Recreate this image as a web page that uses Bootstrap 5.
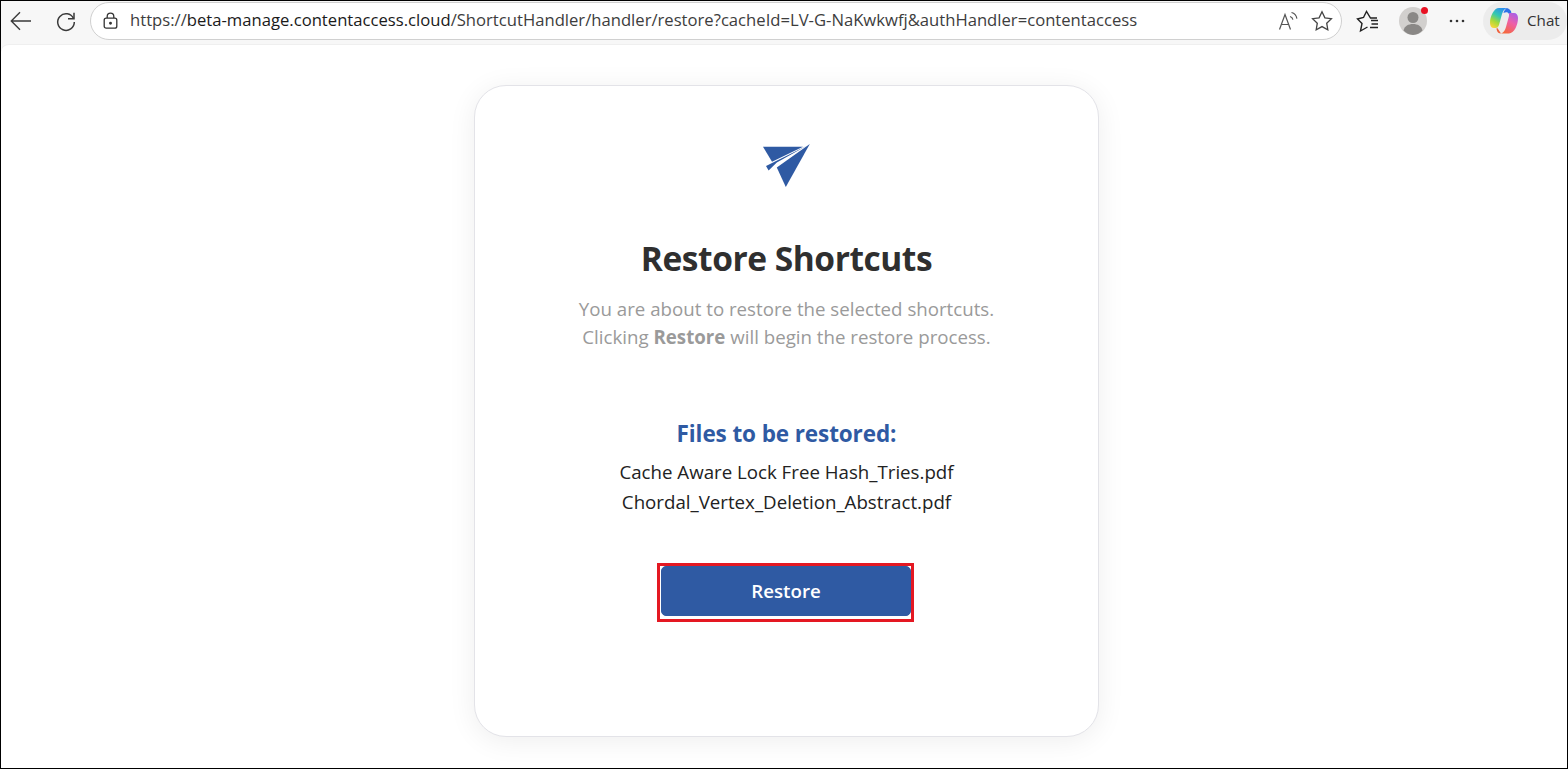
<!DOCTYPE html>
<html lang="en">

<head>
    <meta charset="UTF-8">
    <meta name="viewport" content="width=device-width, initial-scale=1.0">
    <title>Restore Shortcuts</title>
    <link href="https://cdn.jsdelivr.net/npm/bootstrap@5.3.3/dist/css/bootstrap.min.css" rel="stylesheet">
    <style>
        html, body {
            height: 100%;
            overflow: hidden;
        }

        body {
            font-family: "Open Sans", "Noto Sans", sans-serif;
            background: #fff;
        }

        .browser-frame {
            height: 769px;
            border: 1px solid #000;
            background: #f7f7f7;
        }

        .browser-bar {
            height: 43px;
            padding: 0 0 4px 7px;
        }

        .bar-icon {
            width: 26px;
            height: 26px;
            flex: none;
        }

        .reload-icon {
            margin-left: 19px;
        }

        .url-box {
            width: 1252px;
            height: 38px;
            margin-left: 11px;
            padding: 0 7px 0 11px;
            background: #fff;
            border: 1px solid #d0d0d0;
            border-radius: 19px;
        }

        .url-text {
            margin-left: 11px;
            font-size: 16.65px;
            color: #3d3d3d;
            white-space: nowrap;
        }

        .url-text b {
            font-weight: 400;
            color: #1a1a1a;
        }

        .favs-icon {
            margin-left: 13px;
        }

        .avatar-wrap {
            position: relative;
            width: 28px;
            height: 28px;
            margin-left: 18px;
        }

        .avatar-dot {
            position: absolute;
            top: 0;
            right: -1px;
            width: 7px;
            height: 7px;
            border-radius: 50%;
            background: #e81123;
        }

        .more-icon {
            margin-left: 21px;
        }

        .chat-pill {
            width: 84px;
            height: 38px;
            margin-left: auto;
            padding-left: 7px;
            gap: 9px;
            background: #ececec;
            border-radius: 19px;
            font-size: 15.2px;
            color: #333;
        }

        .page-area {
            height: 724px;
            background: #fff;
            border-radius: 8px 0 0 0;
            padding-top: 40px;
            border-top: 1px solid #efefef;
        }

        .restore-card {
            width: 625px;
            height: 652px;
            margin-left: 473px;
            padding-top: 58px;
            text-align: center;
            background: #fff;
            border: 1px solid #e3e3e8;
            border-radius: 32px;
            box-shadow: 0 4px 28px rgba(0, 0, 0, 0.07);
        }

        .restore-title {
            margin: 43px 0 0;
            font-size: 33.5px;
            line-height: 54px;
            font-weight: 700;
            letter-spacing: -0.45px;
            color: #2f2f2f;
        }

        .restore-text {
            margin: 10px 0 0;
            font-size: 18.7px;
            line-height: 28px;
            color: #9a9a9a;
        }

        .files-title {
            margin: 66px 0 0;
            font-size: 22.5px;
            line-height: 34px;
            font-weight: 700;
            letter-spacing: -0.1px;
            color: #2f5aa3;
        }

        .file-names {
            margin: 6px 0 0;
            padding: 0;
            list-style: none;
            font-size: 18.7px;
            line-height: 30px;
            color: #222;
        }

        .highlight-box {
            width: 257px;
            height: 59px;
            margin: 46px 0 0 182px;
            border: 3px solid #e41822;
        }

        .restore-btn {
            width: 250px;
            height: 50px;
            padding: 0;
            font-size: 18.7px;
            font-weight: 600;
            background: #2f5aa3;
            border-color: #2f5aa3;
            border-radius: 5px;
        }
    </style>
</head>

<body>
    <div class="browser-frame d-flex flex-column">
        <div class="browser-bar d-flex align-items-center">
            <svg class="bar-icon" viewBox="0 0 26 26" fill="none" stroke="#3a3a3a" stroke-width="1.4">
                <path d="M3.5 13H23M12 4.2 3.3 13l8.7 8.8" />
            </svg>
            <svg class="bar-icon reload-icon" viewBox="0 0 26 26" fill="none" stroke="#3a3a3a" stroke-width="1.5">
                <path d="M20.5 10.5A8.3 8.3 0 1 0 21.3 14" />
                <path d="M21 4.8v6h-6" />
            </svg>
            <div class="url-box d-flex align-items-center">
                <svg width="17" height="18" viewBox="0 0 17 18" fill="none" stroke="#333" stroke-width="1.3">
                    <rect x="2.2" y="6.2" width="12.6" height="10" rx="2" />
                    <path d="M5.2 6V4.4a3.3 3.3 0 0 1 6.6 0V6" />
                    <circle cx="8.5" cy="11.2" r=".8" fill="#333" />
                </svg>
                <span class="url-text">https://<b>beta-manage.contentaccess.cloud</b>/ShortcutHandler/handler/restore?cacheId=LV-G-NaKwkwfj&amp;authHandler=contentaccess</span>
                <svg class="ms-auto" width="24" height="22" viewBox="0 0 24 22" fill="none" stroke="#555" stroke-width="1.2">
                    <path d="M1.5 19.5 7 4.500l5.500 15M3.300 14.500h7.400" />
                    <path d="M12 6.500c1.600.4 2.600 1.500 2.900 3.200M13.500 2.500c3 .7 4.900 3 5.400 6.200" />
                </svg>
                <svg class="ms-2" width="24" height="24" viewBox="0 0 24 24" fill="none" stroke="#444" stroke-width="1.3">
                    <path d="m12 2.800 2.900 6 6.500.9-4.700 4.500 1.100 6.500-5.800-3.100-5.800 3.100 1.100-6.500-4.700-4.500 6.500-.9z" />
                </svg>
            </div>
            <svg class="bar-icon favs-icon" viewBox="0 0 26 26" fill="none" stroke="#222" stroke-width="1.4">
                <path d="M22 10h-6.500l-4-6.500-3 6-6 1.500 4.500 4.500-1.500 7.500 7-4" />
                <path d="M16 12.500h7M16.500 16h6.500M15 19.500h8" />
            </svg>
            <div class="avatar-wrap">
                <svg width="28" height="28" viewBox="0 0 28 28">
                    <circle cx="14" cy="14" r="14" fill="#d2d0ce" />
                    <circle cx="14" cy="10.500" r="5.500" fill="#8a8886" />
                    <path d="M4.500 23.500c1-4.500 5-6.500 9.500-6.500s8.500 2 9.500 6.500A14 14 0 0 1 14 28a14 14 0 0 1-9.500-4.500z" fill="#8a8886" />
                </svg>
                <span class="avatar-dot"></span>
            </div>
            <svg class="more-icon" width="18" height="6" viewBox="0 0 18 6" fill="#333">
                <circle cx="3" cy="3" r="1.300" />
                <circle cx="9" cy="3" r="1.300" />
                <circle cx="15" cy="3" r="1.300" />
            </svg>
            <div class="chat-pill d-flex align-items-center">
                <svg width="28" height="26" viewBox="0 0 28 26">
                    <defs>
                        <linearGradient id="copilotLeft" x1=".7" y1="0" x2=".2" y2="1">
                            <stop offset="0" stop-color="#2a8ff0" />
                            <stop offset=".4" stop-color="#35c9b0" />
                            <stop offset=".7" stop-color="#a6d93a" />
                            <stop offset="1" stop-color="#f9d63b" />
                        </linearGradient>
                        <linearGradient id="copilotRight" x1=".8" y1="0" x2=".3" y2="1">
                            <stop offset="0" stop-color="#a85fe8" />
                            <stop offset=".45" stop-color="#ee5fa8" />
                            <stop offset="1" stop-color="#f5683c" />
                        </linearGradient>
                    </defs>
                    <path d="M9 0h8c-3 1-4 3-5 6L9 17c-.7 2.500-2.500 3-5 3-2.500 0-4-2-4-5C0 8 4 0 9 0z" fill="url(#copilotLeft)" />
                    <path d="M16 0c2.500 0 4.500 1.500 5.500 4.500L19 6c-1-2-3-2-5.500-1C14 3 15 1 17 0z" fill="#2f72e8" />
                    <path d="M19 5h5c2.500 0 4 2 4 5 0 7-4 15.500-9 15.500h-8c3-1 4-3.500 5-6.500l3-11z" fill="url(#copilotRight)" />
                    <path d="M7 19.500 11 25.500c-2.500 0-4-1.500-4.500-4.500z" fill="#f0603c" />
                </svg>
                <span>Chat</span>
            </div>
        </div>
        <main class="page-area">
            <div class="restore-card">
                <svg width="48" height="44" viewBox=".7 0 48 44">
                    <path d="M.7 2.700h40L9.700 17.700z" fill="#2f5aa3" />
                    <path d="M3.700 22 44 2 14.500 18.500 6.300 26.500z" fill="#2f5aa3" />
                    <path d="M47.500 0 23.500 43 14.500 23.500z" fill="#2f5aa3" />
                </svg>
                <h1 class="restore-title">Restore Shortcuts</h1>
                <p class="restore-text">You are about to restore the selected shortcuts.<br>Clicking <strong>Restore</strong> will begin the restore process.</p>
                <h2 class="files-title">Files to be restored:</h2>
                <ul class="file-names">
                    <li>Cache Aware Lock Free Hash_Tries.pdf</li>
                    <li>Chordal_Vertex_Deletion_Abstract.pdf</li>
                </ul>
                <div class="highlight-box d-flex justify-content-end">
                    <button type="button" class="btn btn-primary restore-btn">Restore</button>
                </div>
            </div>
        </main>
    </div>
    <script src="https://cdn.jsdelivr.net/npm/bootstrap@5.3.3/dist/js/bootstrap.bundle.min.js"></script>
</body>

</html>
